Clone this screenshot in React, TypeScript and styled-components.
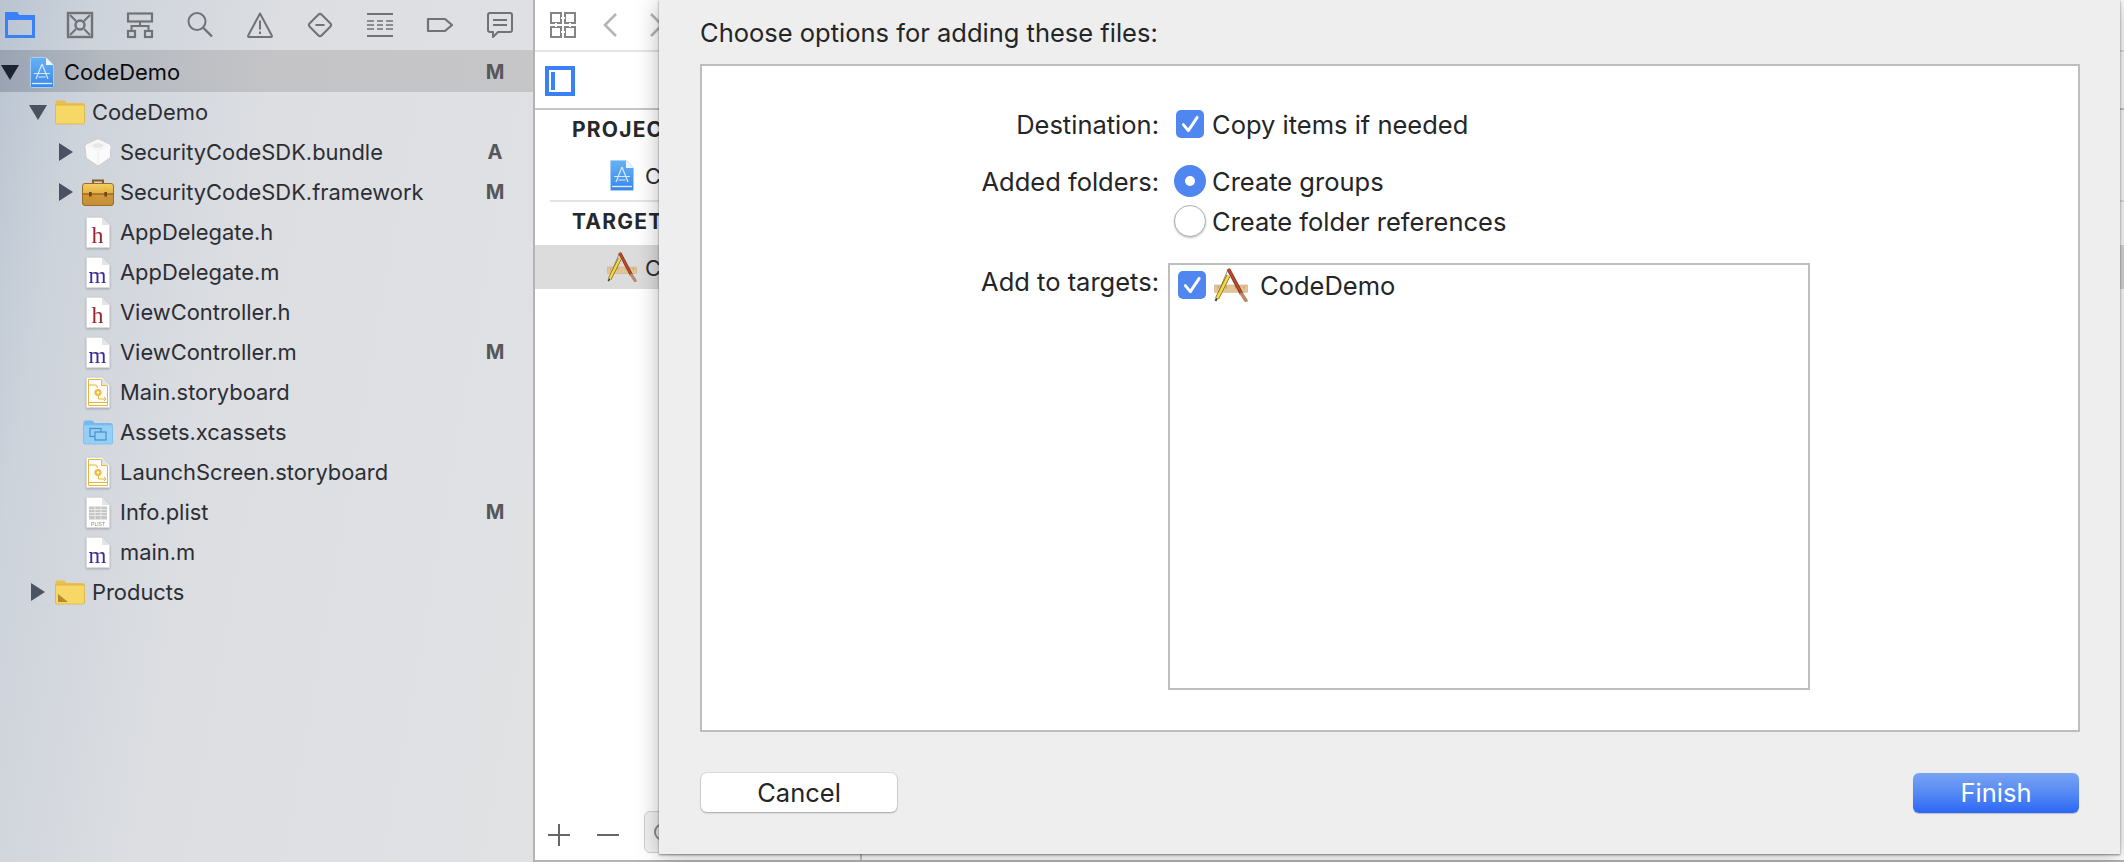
import React from 'react';
import styled, { createGlobalStyle } from 'styled-components';

const GlobalStyle = createGlobalStyle`
  html, body {
    margin: 0;
    padding: 0;
    background: #fff;
    font-family: Inter, "Liberation Sans", sans-serif;
  }
`;

const Window = styled.div`
  position: relative;
  display: flex;
  width: 2124px;
  height: 862px;
  overflow: hidden;
  background: #fff;
`;

/* navigator */

const Sidebar = styled.div`
  width: 533px;
  flex-shrink: 0;
  background: linear-gradient(100deg, #b9c4d1 0%, #cdd3db 14%, #dcdee2 42%, #e1e2e4 100%);
`;

const NavToolbar = styled.div`
  display: flex;
  align-items: center;
  gap: 34px;
  height: 52px;
  padding: 0 0 2px 7px;
  box-sizing: border-box;
`;

const ToolIcon = styled.svg`
  width: 26px;
  height: 26px;
  flex-shrink: 0;
  overflow: visible;
  fill: none;
  stroke: #707276;
  stroke-width: 2;
`;

const Row = styled.div<{ $depth: number; $selected?: boolean }>`
  display: flex;
  align-items: center;
  box-sizing: border-box;
  height: ${p => (p.$selected ? 42 : 40)}px;
  margin-top: ${p => (p.$selected ? -2 : 0)}px;
  padding: ${p => (p.$selected ? 2 : 0)}px 23px 0 ${p => p.$depth * 28}px;
  color: ${p => (p.$selected ? '#0b0b0c' : '#2c2e33')};
  background: ${p => (p.$selected ? 'linear-gradient(90deg, #99a4b3 0%, #b4b9c0 20%, #c4c4c7 50%, #c6c6c8 100%)' : 'none')};
  font-size: 21.9px;
`;

const Disclosure = styled.div`
  width: 26px;
  flex-shrink: 0;
  padding-left: 1px;
  box-sizing: border-box;
  display: flex;
  align-items: center;
`;

const Triangle = styled.div<{ $open: boolean; $dark?: boolean }>`
  width: 0;
  height: 0;
  ${p =>
    p.$open
      ? `border-left: 9px solid transparent; border-right: 9px solid transparent; border-top: 15px solid ${p.$dark ? '#1b2433' : '#4a5160'};`
      : `border-top: 9px solid transparent; border-bottom: 9px solid transparent; border-left: 14px solid ${p.$dark ? '#1b2433' : '#4a5160'}; margin-left: 2px;`}
`;

const IconSlot = styled.div`
  width: 32px;
  height: 34px;
  flex-shrink: 0;
  display: flex;
  align-items: center;
  justify-content: center;
  margin-right: 6px;
`;

const RowName = styled.span`
  flex: 1;
  white-space: nowrap;
`;

const Badge = styled.span`
  width: 30px;
  text-align: center;
  font-size: 20px;
  font-weight: 700;
  color: #55575b;
`;

/* editor pane behind the sheet */

const ProjectPane = styled.div`
  flex: 1;
  display: flex;
  flex-direction: column;
  border-left: 2px solid #b4b4b4;
  border-bottom: 2px solid #b4b4b4;
`;

const PaneTop = styled.div`
  display: flex;
  align-items: center;
  gap: 27px;
  height: 50px;
  padding-left: 15px;
  border-bottom: 2px solid #e4e4e4;
`;

const PaneStrip = styled.div`
  display: flex;
  align-items: center;
  height: 58px;
  padding: 2px 0 0 10px;
  box-sizing: border-box;
  border-bottom: 2px solid #c6c6c6;
`;

const ListHead = styled.div`
  height: 40px;
  line-height: 40px;
  padding-left: 37px;
  font-size: 21px;
  font-weight: 700;
  letter-spacing: 1.2px;
  white-space: nowrap;
  color: #26282b;
`;

const ListRow = styled.div<{ $selected?: boolean }>`
  display: flex;
  align-items: center;
  gap: 8px;
  height: ${p => (p.$selected ? 44 : 50)}px;
  margin-top: ${p => (p.$selected ? 3 : 0)}px;
  padding-left: 72px;
  background: ${p => (p.$selected ? '#dcdcdc' : 'transparent')};
  font-size: 21.9px;
  color: #2c2e33;
`;

const ListIconSlot = styled.div`
  display: flex;
  justify-content: center;
  width: 30px;
`;

const ListName = styled.span`
  margin-top: 2px;
`;

const ListRule = styled.div`
  height: 2px;
  margin-left: 15px;
  background: #e4e4e4;
`;

const PaneSpacer = styled.div`
  flex: 1;
`;

const PaneBottom = styled.div`
  display: flex;
  align-items: center;
  height: 50px;
  padding-left: 13px;
  gap: 27px;
`;

const FilterBox = styled.div`
  display: flex;
  align-items: center;
  width: 214px;
  height: 42px;
  margin-left: -2px;
  margin-bottom: 7px;
  padding-left: 8px;
  box-sizing: border-box;
  background: #f1f1f1;
  border: 1px solid #cfcfcf;
  border-radius: 6px;
`;

const BottomTick = styled.div`
  width: 2px;
  height: 8px;
  align-self: flex-end;
  margin-left: -25px;
  background: #c4c4c4;
`;

/* sheet */

const Sheet = styled.div`
  position: absolute;
  left: 659px;
  top: 0;
  width: 1461px;
  height: 854px;
  display: flex;
  flex-direction: column;
  padding: 0 40px 0 41px;
  box-sizing: border-box;
  background: #eeeeee;
  color: #242527;
  font-size: 25.5px;
  box-shadow: 0 1px 2px rgba(0, 0, 0, 0.45), 0 2px 22px rgba(0, 0, 0, 0.28);
`;

const SheetTitle = styled.div`
  height: 64px;
  line-height: 65px;
  white-space: nowrap;
`;

const OptionsBox = styled.div`
  height: 668px;
  padding-top: 44px;
  box-sizing: border-box;
  background: #fff;
  border: 2px solid #bdbdbd;
  display: grid;
  grid-template-columns: 457px 1fr;
  grid-auto-rows: min-content;
  column-gap: 9px;
  row-gap: 26px;
`;

const FieldLabel = styled.div<{ $offset?: number }>`
  height: 28px;
  line-height: 28px;
  text-align: right;
  margin-top: ${p => p.$offset ?? 0}px;
`;

const OptionColumn = styled.div`
  display: flex;
  flex-direction: column;
  gap: 8px;
  padding-left: 6px;
`;

const Option = styled.div`
  display: flex;
  align-items: center;
  min-height: 28px;
  line-height: 28px;
  white-space: nowrap;
`;

const OptionText = styled.span`
  margin: 1px 0 -1px;
`;

const Checkbox = styled.div`
  width: 28px;
  height: 28px;
  margin: 0 8px 0 2px;
  flex-shrink: 0;
  border-radius: 5px;
  background: #4f86f0;
  display: flex;
  align-items: center;
  justify-content: center;
`;

const Radio = styled.div<{ $checked?: boolean }>`
  width: 32px;
  height: 32px;
  margin-right: 6px;
  flex-shrink: 0;
  box-sizing: border-box;
  border-radius: 50%;
  display: flex;
  align-items: center;
  justify-content: center;
  background: ${p => (p.$checked ? '#4f86f0' : '#fff')};
  border: ${p => (p.$checked ? 'none' : '1px solid #b0b0b0')};
  box-shadow: ${p => (p.$checked ? 'none' : '0 1px 2px rgba(0, 0, 0, 0.25)')};
`;

const RadioDot = styled.div`
  width: 10px;
  height: 10px;
  border-radius: 50%;
  background: #fff;
`;

const TargetList = styled.div`
  width: 642px;
  height: 427px;
  box-sizing: border-box;
  border: 2px solid #bdbdbd;
  padding: 6px 0 0 6px;
`;

const TargetRow = styled.div`
  display: flex;
  align-items: center;
  height: 28px;
`;

const TargetName = styled.span`
  margin-left: 12px;
`;

const SheetFooter = styled.div`
  display: flex;
  justify-content: space-between;
  align-items: flex-start;
  padding: 41px 1px 0 1px;
`;

const SheetButton = styled.div<{ $primary?: boolean }>`
  width: ${p => (p.$primary ? 166 : 196)}px;
  height: ${p => (p.$primary ? 40 : 39)}px;
  line-height: 40px;
  text-align: center;
  box-sizing: border-box;
  border-radius: 6px;
  color: ${p => (p.$primary ? '#fff' : '#242527')};
  background: ${p => (p.$primary ? 'linear-gradient(180deg, #78a3f5 0%, #5a8df3 45%, #2b67f6 100%)' : '#fff')};
  box-shadow: ${p =>
    p.$primary ? '0 1px 1px rgba(0, 0, 0, 0.2)' : '0 0 0 1px rgba(0, 0, 0, 0.08), 0 1px 2px rgba(0, 0, 0, 0.25)'};
`;

/* drawings */

const Check = () => (
  <svg width="20" height="20" viewBox="0 0 18 18" fill="none" stroke="#fff" strokeWidth="2.6" strokeLinecap="round" strokeLinejoin="round">
    <path d="M3 9.5l4.5 5.5L15.5 3" />
  </svg>
);

const NavigatorTools = () => (
  <>
    <svg width="30" height="26" viewBox="0 0 30 26" style={{ marginLeft: -2, marginRight: -2, flexShrink: 0 }}>
      <path d="M1.5 24.5V1.5h10l2 3h15v20z" fill="none" stroke="#3a80f6" strokeWidth="3" />
      <rect x="1" y="3" width="28" height="5" fill="#3a80f6" />
    </svg>
    <ToolIcon viewBox="0 0 26 26">
      <rect x="1" y="1" width="24" height="24" strokeWidth="2.4" />
      <circle cx="13" cy="13" r="4.5" strokeWidth="2.4" />
      <path d="M3 3l6 6M23 3l-6 6M3 23l6-6M23 23l-6-6" />
    </ToolIcon>
    <ToolIcon viewBox="0 0 26 26">
      <rect x="1" y="1.5" width="24" height="8" strokeWidth="2.2" />
      <rect x="1" y="19" width="7" height="6" strokeWidth="2.2" />
      <rect x="18" y="19" width="7" height="6" strokeWidth="2.2" />
      <path d="M13 9.5V14M4.5 19v-5h17v5" />
    </ToolIcon>
    <ToolIcon viewBox="0 0 26 26">
      <circle cx="10" cy="9.5" r="8.5" />
      <path d="M16.5 16l8.5 8.5" strokeWidth="2.4" />
    </ToolIcon>
    <ToolIcon viewBox="0 0 26 26">
      <path d="M13 1.5L1.2 23.5a1 1 0 0 0 .8 1.5h22a1 1 0 0 0 .8-1.5z" strokeLinejoin="round" />
      <path d="M13 8.5v9M13 19.5v2.6" />
    </ToolIcon>
    <ToolIcon viewBox="0 0 26 26">
      <rect x="4.5" y="4.5" width="17" height="17" rx="2.5" transform="rotate(45 13 13)" />
      <path d="M8.5 13h9" />
    </ToolIcon>
    <ToolIcon viewBox="0 0 26 26">
      <path d="M0 2h26M0 24h26" />
      <path d="M0 9h7M10 9h6M19 9h7M0 13h7M10 13h6M19 13h7M0 17h7M10 17h6M19 17h7" strokeWidth="1.6" />
    </ToolIcon>
    <ToolIcon viewBox="0 0 26 26">
      <path d="M1 7h17l7 6-7 6H1z" strokeWidth="2.2" strokeLinejoin="round" />
    </ToolIcon>
    <ToolIcon viewBox="0 0 26 26">
      <path d="M3 1h20a2 2 0 0 1 2 2v15a2 2 0 0 1-2 2H11l-5 5v-5H3a2 2 0 0 1-2-2V3a2 2 0 0 1 2-2z" strokeLinejoin="round" />
      <path d="M6 8h14M6 13h14" />
    </ToolIcon>
  </>
);

const ProjectIcon = () => (
  <svg width="24" height="31" viewBox="0 0 24 31">
    <defs>
      <linearGradient id="projectFill" x1="0" y1="0" x2="0" y2="1">
        <stop offset="0" stopColor="#66b2f3" />
        <stop offset="1" stopColor="#3b86ec" />
      </linearGradient>
    </defs>
    <path d="M0.5 1.5a1 1 0 0 1 1-1H16l7.5 7.5v21.5a1 1 0 0 1-1 1h-21a1 1 0 0 1-1-1z" fill="url(#projectFill)" stroke="#a5cff5" />
    <path d="M16 0.5V8h7.5z" fill="#eef6fd" />
    <path d="M12 7L6 22M12 7l6 15M4 16.5h16M8.5 20h7" stroke="#d6e9fb" strokeWidth="1.2" fill="none" />
    <path d="M2 26.5h20" stroke="#e0effc" strokeWidth="1.3" />
  </svg>
);

const FolderIcon = ({ smart }: { smart?: boolean }) => (
  <svg width="30" height="25" viewBox="0 0 30 25">
    <path d="M0.5 2.5a2 2 0 0 1 2-2h7l2 2.5h16a2 2 0 0 1 2 2v17.5a1.5 1.5 0 0 1-1.5 1.5H2a1.5 1.5 0 0 1-1.5-1.5z" fill="#e9c04c" />
    <path d="M0.5 5h29v17.5a1.5 1.5 0 0 1-1.5 1.5H2a1.5 1.5 0 0 1-1.5-1.5z" fill="#f7d765" stroke="#dcb445" strokeWidth="0.8" />
    {smart && <path d="M3 22v-8l10 8z" fill="#b58a2e" />}
  </svg>
);

const BundleIcon = () => (
  <svg width="30" height="29" viewBox="0 0 30 29">
    <path
      d="M13.5 1.2a3 3 0 0 1 3 0l10.5 5a2 2 0 0 1 1.2 2L27 19a2.5 2.5 0 0 1-1.3 1.9L16 27.6a2 2 0 0 1-2 0L4.3 20.9A2.5 2.5 0 0 1 3 19L1.8 8.2a2 2 0 0 1 1.2-2z"
      fill="#f6f6f7"
      stroke="#c9cbcf"
    />
    <path d="M3 8l12 6 12-6V19L15 27 4 19z" fill="#fbfbfb" />
    <path d="M15 14v13" stroke="#ececed" />
    <ellipse cx="15" cy="7.5" rx="5.5" ry="2.6" fill="#e6e7e9" />
  </svg>
);

const ToolboxIcon = () => (
  <svg width="32" height="27" viewBox="0 0 32 27">
    <defs>
      <linearGradient id="toolboxFill" x1="0" y1="0" x2="0" y2="1">
        <stop offset="0" stopColor="#f3cf63" />
        <stop offset="0.45" stopColor="#e3b143" />
        <stop offset="0.5" stopColor="#cf9a3a" />
        <stop offset="1" stopColor="#c48d34" />
      </linearGradient>
    </defs>
    <path d="M11 5V1.5h10V5" fill="none" stroke="#8a5d20" strokeWidth="2" />
    <rect x="0.5" y="4.5" width="31" height="22" rx="2.5" fill="url(#toolboxFill)" stroke="#9a6e28" />
    <path d="M0.5 15h31" stroke="#8a5d20" strokeWidth="1.2" />
    <rect x="7" y="13" width="2.6" height="4.5" fill="#6d4716" />
    <rect x="22.4" y="13" width="2.6" height="4.5" fill="#6d4716" />
  </svg>
);

const DocShape = ({ children }: { children?: React.ReactNode }) => (
  <svg width="24" height="31" viewBox="0 0 24 31" style={{ filter: 'drop-shadow(0 1px 1px rgba(0,0,0,0.25))' }}>
    <path d="M0.5 0.5H16l7.5 7.5v22.5H0.5z" fill="#fff" stroke="#dcdcdc" strokeWidth="0.8" />
    <path d="M16 0.5V8h7.5z" fill="#e3e3e3" />
    {children}
  </svg>
);

const SourceIcon = ({ letter }: { letter: 'h' | 'm' }) => (
  <DocShape>
    <text
      x="11.5"
      y="25.5"
      textAnchor="middle"
      fontFamily='"Liberation Serif", serif'
      fontSize={letter === 'h' ? 24 : 23}
      fill={letter === 'h' ? '#9c2430' : '#3f2a95'}
    >
      {letter}
    </text>
  </DocShape>
);

const StoryboardIcon = () => (
  <DocShape>
    <path d="M2.5 2.5h13v6h6v20h-19z" fill="#fffdf5" stroke="#e5b640" strokeWidth="1" />
    <path d="M2.5 25.5h19" stroke="#e5b640" />
    <path d="M2.5 8h6.5q2.5 0 2.5 3M12.5 19v3h7.5M18 20l2 2-2 2" fill="none" stroke="#e5b640" strokeWidth="1" />
    <circle cx="12" cy="15.5" r="3.6" fill="#edbc3c" />
    <circle cx="12" cy="15.5" r="1.3" fill="#fffdf5" />
  </DocShape>
);

const AssetsIcon = () => (
  <svg width="30" height="25" viewBox="0 0 30 25">
    <path d="M0.5 2.5a2 2 0 0 1 2-2h7l2 2.5h16a2 2 0 0 1 2 2v17.5a1.5 1.5 0 0 1-1.5 1.5H2a1.5 1.5 0 0 1-1.5-1.5z" fill="#74b9ec" />
    <path d="M0.5 5h29v17.5a1.5 1.5 0 0 1-1.5 1.5H2a1.5 1.5 0 0 1-1.5-1.5z" fill="#93cff7" stroke="#7dbbea" strokeWidth="0.8" />
    <rect x="7" y="8.5" width="11" height="8" fill="none" stroke="#4b8fc6" strokeWidth="1.2" />
    <rect x="12" y="12" width="11" height="8" fill="#93cff7" stroke="#4b8fc6" strokeWidth="1.2" />
  </svg>
);

const PlistIcon = () => (
  <DocShape>
    <path d="M3 9.5h18v13H3z" fill="#c6c6c6" />
    <path d="M3 12.5h18M3 15.5h18M3 18.5h18M9 9.5v13M15 9.5v13" stroke="#f2f2f2" strokeWidth="0.8" />
    <text x="12" y="28.5" textAnchor="middle" fontFamily='"Liberation Sans", sans-serif' fontSize="5" fill="#8a8a8a">
      PLIST
    </text>
  </DocShape>
);

const AppIcon = ({ size = 30 }: { size?: number }) => (
  <svg width={size} height={size} viewBox="0 0 33 32">
    <rect x="0.5" y="16" width="32" height="7" fill="#e2c596" stroke="#c4a477" strokeWidth="0.5" />
    <path d="M4 17v2.5M8 17v2.5M12 17v2.5M21 17v2.5M25 17v2.5M29 17v2.5" stroke="#ab8a5e" strokeWidth="0.7" />
    <path d="M14 0L1 31" stroke="#77736a" strokeWidth="0.8" />
    <path d="M14 0.5L27 25" stroke="#7c3a26" strokeWidth="3.6" />
    <path d="M14 0.5L27 25" stroke="#c2472b" strokeWidth="2" />
    <path d="M27 25L31 31" stroke="#b9896a" strokeWidth="3.4" strokeLinecap="round" />
    <path d="M14 7L3 29" stroke="#7e6a1c" strokeWidth="4" />
    <path d="M14 7L3 29" stroke="#f4d93c" strokeWidth="2.6" />
    <path d="M3 29L1.5 31.5" stroke="#3a3a3a" strokeWidth="1.6" />
  </svg>
);

type Kind = 'project' | 'folder' | 'products' | 'bundle' | 'toolbox' | 'h' | 'm' | 'story' | 'assets' | 'plist';

type NavItem = {
  name: string;
  depth: number;
  kind: Kind;
  open?: boolean;
  status?: string;
};

const items: NavItem[] = [
  { name: 'CodeDemo', depth: 0, kind: 'project', open: true, status: 'M' },
  { name: 'CodeDemo', depth: 1, kind: 'folder', open: true },
  { name: 'SecurityCodeSDK.bundle', depth: 2, kind: 'bundle', open: false, status: 'A' },
  { name: 'SecurityCodeSDK.framework', depth: 2, kind: 'toolbox', open: false, status: 'M' },
  { name: 'AppDelegate.h', depth: 2, kind: 'h' },
  { name: 'AppDelegate.m', depth: 2, kind: 'm' },
  { name: 'ViewController.h', depth: 2, kind: 'h' },
  { name: 'ViewController.m', depth: 2, kind: 'm', status: 'M' },
  { name: 'Main.storyboard', depth: 2, kind: 'story' },
  { name: 'Assets.xcassets', depth: 2, kind: 'assets' },
  { name: 'LaunchScreen.storyboard', depth: 2, kind: 'story' },
  { name: 'Info.plist', depth: 2, kind: 'plist', status: 'M' },
  { name: 'main.m', depth: 2, kind: 'm' },
  { name: 'Products', depth: 1, kind: 'products', open: false },
];

const renderIcon = (kind: Kind) => {
  switch (kind) {
    case 'project':
      return <ProjectIcon />;
    case 'folder':
      return <FolderIcon />;
    case 'products':
      return <FolderIcon smart />;
    case 'bundle':
      return <BundleIcon />;
    case 'toolbox':
      return <ToolboxIcon />;
    case 'h':
      return <SourceIcon letter="h" />;
    case 'm':
      return <SourceIcon letter="m" />;
    case 'story':
      return <StoryboardIcon />;
    case 'assets':
      return <AssetsIcon />;
    case 'plist':
      return <PlistIcon />;
  }
};

export default function App() {
  return (
    <Window>
      <GlobalStyle />
      <Sidebar>
        <NavToolbar>
          <NavigatorTools />
        </NavToolbar>
        {items.map((item, i) => (
          <Row key={i} $depth={item.depth} $selected={i === 0}>
            <Disclosure>
              {item.open !== undefined && <Triangle $open={item.open} $dark={i === 0} />}
            </Disclosure>
            <IconSlot>{renderIcon(item.kind)}</IconSlot>
            <RowName>{item.name}</RowName>
            {item.status && <Badge>{item.status}</Badge>}
          </Row>
        ))}
      </Sidebar>

      <ProjectPane>
        <PaneTop>
          <ToolIcon viewBox="0 0 26 26" style={{ stroke: '#858585' }}>
            <path d="M1 1h10v10H1zM15 1h10v10H15zM1 15h10v10H1zM15 15h10v10H15z" />
            <path d="M11 6h4M6 11v4M20 11v4M11 20h4" stroke="#fff" strokeWidth="2" />
          </ToolIcon>
          <svg width="14" height="24" viewBox="0 0 14 24" fill="none" stroke="#b5b5b5" strokeWidth="2.6" style={{ flexShrink: 0 }}>
            <path d="M13 1L2 12l11 11" />
          </svg>
          <svg width="14" height="24" viewBox="0 0 14 24" fill="none" stroke="#b5b5b5" strokeWidth="2.6" style={{ flexShrink: 0, marginLeft: 6 }}>
            <path d="M1 1l11 11L1 23" />
          </svg>
        </PaneTop>
        <PaneStrip>
          <svg width="30" height="30" viewBox="0 0 30 30">
            <rect x="2" y="2" width="26" height="26" fill="#fff" stroke="#3a80f6" strokeWidth="4" />
            <rect x="6" y="6" width="4" height="18" fill="#3a80f6" />
          </svg>
        </PaneStrip>
        <ListHead>PROJECT</ListHead>
        <ListRow>
          <ListIconSlot>
            <ProjectIcon />
          </ListIconSlot>
          <ListName>CodeDemo</ListName>
        </ListRow>
        <ListRule />
        <ListHead>TARGETS</ListHead>
        <ListRow $selected>
          <ListIconSlot>
            <AppIcon />
          </ListIconSlot>
          <ListName>CodeDemo</ListName>
        </ListRow>
        <PaneSpacer />
        <PaneBottom>
          <svg width="22" height="22" viewBox="0 0 22 22" stroke="#666" strokeWidth="2" style={{ flexShrink: 0 }}>
            <path d="M11 0v22M0 11h22" />
          </svg>
          <svg width="22" height="22" viewBox="0 0 22 22" stroke="#666" strokeWidth="2" style={{ flexShrink: 0 }}>
            <path d="M0 11h22" />
          </svg>
          <FilterBox>
            <svg width="20" height="20" viewBox="0 0 20 20" fill="none" stroke="#888" strokeWidth="2">
              <circle cx="10" cy="10" r="8" />
            </svg>
          </FilterBox>
          <BottomTick />
        </PaneBottom>
      </ProjectPane>

      <Sheet>
        <SheetTitle>Choose options for adding these files:</SheetTitle>
        <OptionsBox>
          <FieldLabel $offset={1}>Destination:</FieldLabel>
          <OptionColumn>
            <Option>
              <Checkbox>
                <Check />
              </Checkbox>
              <OptionText>Copy items if needed</OptionText>
            </Option>
          </OptionColumn>

          <FieldLabel $offset={3}>Added folders:</FieldLabel>
          <OptionColumn>
            <Option>
              <Radio $checked>
                <RadioDot />
              </Radio>
              <OptionText>Create groups</OptionText>
            </Option>
            <Option>
              <Radio />
              <OptionText>Create folder references</OptionText>
            </Option>
          </OptionColumn>

          <FieldLabel $offset={5}>Add to targets:</FieldLabel>
          <TargetList>
            <TargetRow>
              <Checkbox>
                <Check />
              </Checkbox>
              <AppIcon size={34} />
              <TargetName>CodeDemo</TargetName>
            </TargetRow>
          </TargetList>
        </OptionsBox>
        <SheetFooter>
          <SheetButton>Cancel</SheetButton>
          <SheetButton $primary>Finish</SheetButton>
        </SheetFooter>
      </Sheet>
    </Window>
  );
}
